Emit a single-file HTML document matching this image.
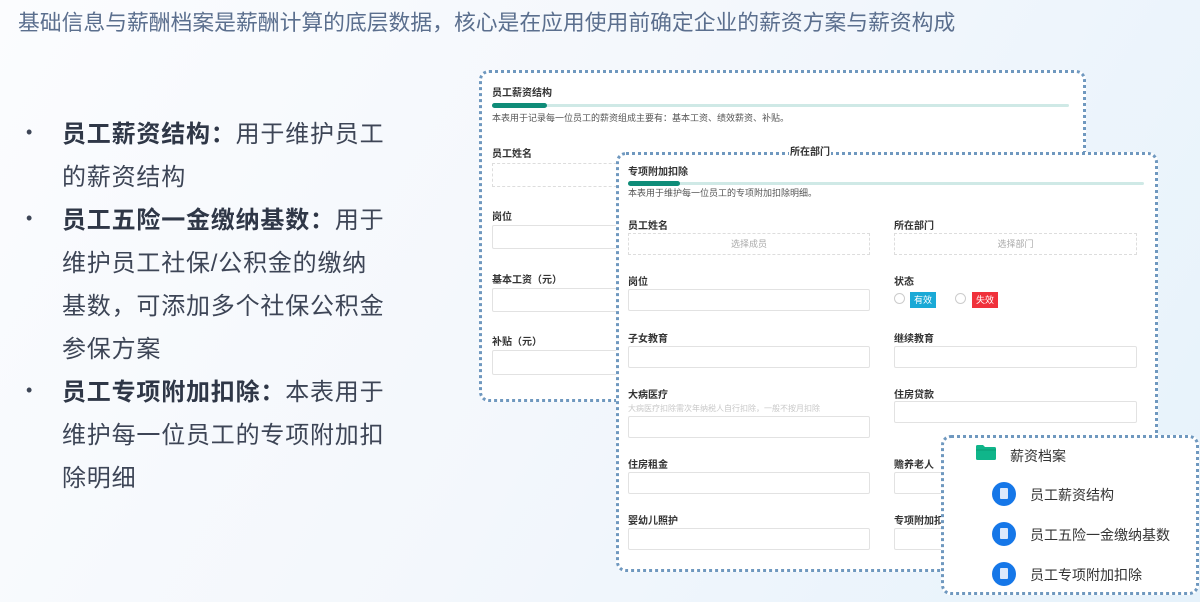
<!DOCTYPE html>
<html><head><meta charset="utf-8"><style>
*{margin:0;padding:0;box-sizing:border-box}
body{width:1200px;height:602px;overflow:hidden;position:relative;font-family:"Liberation Sans","Noto Sans CJK SC",sans-serif;background:linear-gradient(120deg,#fbfcfe 0%,#f3f7fc 50%,#e6f2fb 100%)}
.a{position:absolute;white-space:nowrap}
.h{left:18px;top:6px;font-size:21.8px;color:#5b6f8e}
.b{left:62px;font-size:24px;letter-spacing:0.8px;color:#3d4556;line-height:43px}
.b b{font-weight:700;color:#2f3747}
.dot{left:26px;font-size:18px;color:#3d4556}
.card{position:absolute;background:#fff;border:3px dotted #6f98bf;border-radius:10px}
.t{font-size:10px;font-weight:700;color:#333}
.d{font-size:9px;color:#555}
.l{font-size:10px;font-weight:700;color:#333}
.in{position:absolute;border:1px solid #e2e2e2;border-radius:2px;background:#fff}
.ph{position:absolute;border:1px dashed #ddd;font-size:9px;color:#aaa;text-align:center}
.bar{position:absolute;height:3px;background:#cfe9e6;border-radius:2px}
.bar i{position:absolute;left:0;top:-1px;height:5px;background:#0f8c78;border-radius:3px}
.ic{position:absolute;width:24px;height:24px;border-radius:50%;background:#1677e8}
.ic::after{content:"";position:absolute;left:8px;top:6px;width:8px;height:11px;background:#dde9fb;border-radius:1px}
.it{font-size:14px;color:#333}
</style></head><body>
<div class="a h">基础信息与薪酬档案是薪酬计算的底层数据，核心是在应用使用前确定企业的薪资方案与薪资构成</div>

<div class="a dot" style="top:122px">•</div>
<div class="a b" style="top:113px"><b>员工薪资结构：</b>用于维护员工<br>的薪资结构</div>
<div class="a dot" style="top:208px">•</div>
<div class="a b" style="top:199px"><b>员工五险一金缴纳基数：</b>用于<br>维护员工社保/公积金的缴纳<br>基数，可添加多个社保公积金<br>参保方案</div>
<div class="a dot" style="top:380px">•</div>
<div class="a b" style="top:371px"><b>员工专项附加扣除：</b>本表用于<br>维护每一位员工的专项附加扣<br>除明细</div>

<div class="card" style="left:479px;top:70px;width:607px;height:332px"></div>
<div class="a t" style="left:492px;top:84px">员工薪资结构</div>
<div class="bar" style="left:492px;top:104px;width:577px"><i style="width:55px"></i></div>
<div class="a d" style="left:492px;top:111px">本表用于记录每一位员工的薪资组成主要有：基本工资、绩效薪资、补贴。</div>
<div class="a l" style="left:492px;top:145px">员工姓名</div>
<div class="ph" style="left:492px;top:163px;width:140px;height:24px;line-height:22px;text-align:right">选</div>
<div class="a l" style="left:492px;top:208px">岗位</div>
<div class="in" style="left:492px;top:225px;width:140px;height:24px"></div>
<div class="a l" style="left:492px;top:271px">基本工资（元）</div>
<div class="in" style="left:492px;top:288px;width:140px;height:24px"></div>
<div class="a l" style="left:492px;top:333px">补贴（元）</div>
<div class="in" style="left:492px;top:350px;width:140px;height:25px"></div>

<div class="card" style="left:616px;top:152px;width:542px;height:420px"></div>
<div class="a l" style="left:789px;top:143px;background:#fff;padding:0 1px">所在部门</div>
<div class="a t" style="left:628px;top:163px">专项附加扣除</div>
<div class="bar" style="left:628px;top:182px;width:516px"><i style="width:52px"></i></div>
<div class="a d" style="left:628px;top:186px">本表用于维护每一位员工的专项附加扣除明细。</div>
<div class="a l" style="left:628px;top:217px">员工姓名</div>
<div class="a l" style="left:894px;top:217px">所在部门</div>
<div class="ph" style="left:628px;top:233px;width:242px;height:22px;line-height:20px">选择成员</div>
<div class="ph" style="left:894px;top:233px;width:243px;height:22px;line-height:20px">选择部门</div>
<div class="a l" style="left:628px;top:273px">岗位</div>
<div class="a l" style="left:894px;top:273px">状态</div>
<div class="in" style="left:628px;top:289px;width:242px;height:22px"></div>
<div class="a" style="left:894px;top:293px;width:11px;height:11px;border:1px solid #ccc;border-radius:50%"></div>
<div class="a" style="left:910px;top:292px;width:26px;height:16px;background:#1aa9d6;color:#fff;font-size:9px;text-align:center;line-height:16px">有效</div>
<div class="a" style="left:955px;top:293px;width:11px;height:11px;border:1px solid #ccc;border-radius:50%"></div>
<div class="a" style="left:972px;top:292px;width:26px;height:16px;background:#f0313b;color:#fff;font-size:9px;text-align:center;line-height:16px">失效</div>
<div class="a l" style="left:628px;top:330px">子女教育</div>
<div class="a l" style="left:894px;top:330px">继续教育</div>
<div class="in" style="left:628px;top:346px;width:242px;height:22px"></div>
<div class="in" style="left:894px;top:346px;width:243px;height:22px"></div>
<div class="a l" style="left:628px;top:386px">大病医疗</div>
<div class="a l" style="left:894px;top:386px">住房贷款</div>
<div class="a" style="left:628px;top:403px;font-size:8px;color:#c8c8c8">大病医疗扣除需次年纳税人自行扣除，一般不按月扣除</div>
<div class="in" style="left:628px;top:416px;width:242px;height:22px"></div>
<div class="in" style="left:894px;top:401px;width:243px;height:22px"></div>
<div class="a l" style="left:628px;top:456px">住房租金</div>
<div class="a l" style="left:894px;top:456px">赡养老人</div>
<div class="in" style="left:628px;top:472px;width:242px;height:22px"></div>
<div class="in" style="left:894px;top:472px;width:60px;height:22px"></div>
<div class="a l" style="left:628px;top:512px">婴幼儿照护</div>
<div class="a l" style="left:894px;top:512px">专项附加扣</div>
<div class="in" style="left:628px;top:528px;width:242px;height:22px"></div>
<div class="in" style="left:894px;top:528px;width:60px;height:22px"></div>

<div class="card" style="left:941px;top:435px;width:258px;height:160px"></div>
<svg class="a" style="left:976px;top:445px" width="20" height="15" viewBox="0 0 20 15"><path d="M0 1.5Q0 0 1.5 0H7L9 2H18.5Q20 2 20 3.5V13.5Q20 15 18.5 15H1.5Q0 15 0 13.5Z" fill="#10b58a"/><path d="M0 5H20" stroke="#0a9a74" stroke-width="1"/></svg>
<div class="a it" style="left:1010px;top:446px">薪资档案</div>
<div class="ic" style="left:992px;top:482px"></div>
<div class="a it" style="left:1030px;top:485px">员工薪资结构</div>
<div class="ic" style="left:992px;top:522px"></div>
<div class="a it" style="left:1030px;top:525px">员工五险一金缴纳基数</div>
<div class="ic" style="left:992px;top:562px"></div>
<div class="a it" style="left:1030px;top:565px">员工专项附加扣除</div>
</body></html>
